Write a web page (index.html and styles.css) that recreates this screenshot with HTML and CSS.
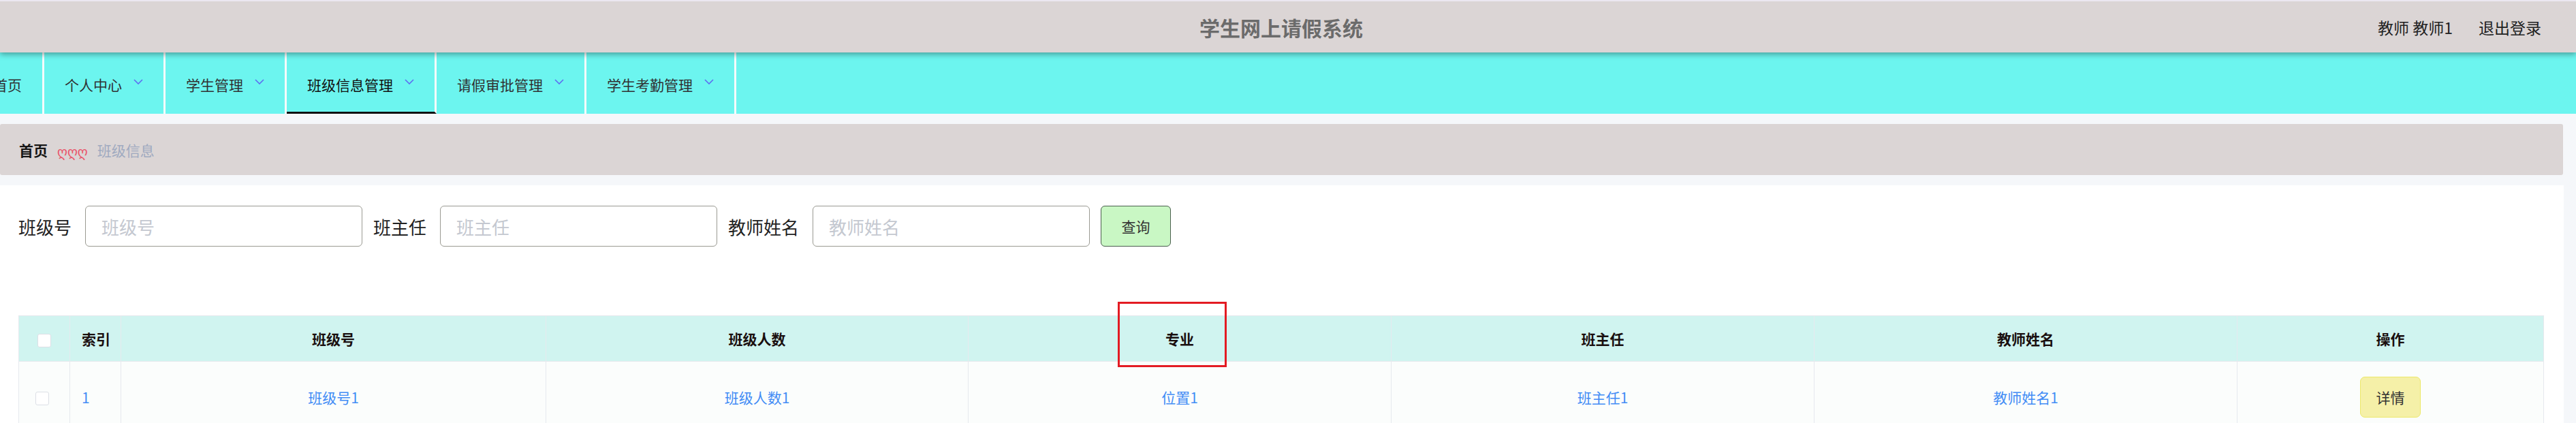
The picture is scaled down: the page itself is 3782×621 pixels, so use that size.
FILE: index.html
```html
<!DOCTYPE html>
<html lang="zh">
<head>
<meta charset="utf-8">
<title>学生网上请假系统</title>
<link rel="stylesheet" href="styles.css">
</head>
<body>
<header class="header">
  <div class="header-side"></div>
  <div class="title">学生网上请假系统</div>
  <div class="header-side user">
    <span class="user-name">教师 教师1</span>
    <span class="logout">退出登录</span>
  </div>
</header>
<nav class="nav">
  <ul class="menu">
    <li class="menu-item first">首页</li>
    <li class="menu-item">个人中心<svg class="arrow" viewBox="0 0 14 8"><polyline points="1,1 7,7 13,1"/></svg></li>
    <li class="menu-item">学生管理<svg class="arrow" viewBox="0 0 14 8"><polyline points="1,1 7,7 13,1"/></svg></li>
    <li class="menu-item active">班级信息管理<svg class="arrow" viewBox="0 0 14 8"><polyline points="1,1 7,7 13,1"/></svg></li>
    <li class="menu-item">请假审批管理<svg class="arrow" viewBox="0 0 14 8"><polyline points="1,1 7,7 13,1"/></svg></li>
    <li class="menu-item">学生考勤管理<svg class="arrow" viewBox="0 0 14 8"><polyline points="1,1 7,7 13,1"/></svg></li>
  </ul>
</nav>
<main class="main">
  <div class="breadcrumb">
    <span class="crumb-home">首页</span>
    <span class="crumb-sep">ღღღ</span>
    <span class="crumb-current">班级信息</span>
  </div>
  <section class="panel">
    <form class="search">
      <label class="search-label">班级号</label>
      <input class="search-input" placeholder="班级号">
      <label class="search-label">班主任</label>
      <input class="search-input" placeholder="班主任">
      <label class="search-label">教师姓名</label>
      <input class="search-input" placeholder="教师姓名">
      <button type="button" class="btn-search">查询</button>
    </form>
    <table class="grid">
      <colgroup>
        <col class="c-check"><col class="c-index"><col class="c-624"><col class="c-620"><col class="c-621"><col class="c-621"><col class="c-621"><col class="c-450">
      </colgroup>
      <thead>
        <tr>
          <th><span class="checkbox"></span></th>
          <th class="left">索引</th>
          <th>班级号</th>
          <th>班级人数</th>
          <th class="marked">专业<span class="mark-box"></span></th>
          <th>班主任</th>
          <th>教师姓名</th>
          <th>操作</th>
        </tr>
      </thead>
      <tbody>
        <tr>
          <td><span class="checkbox small"></span></td>
          <td class="left">1</td>
          <td>班级号1</td>
          <td>班级人数1</td>
          <td>位置1</td>
          <td>班主任1</td>
          <td>教师姓名1</td>
          <td><button type="button" class="btn-detail">详情</button></td>
        </tr>
      </tbody>
    </table>
  </section>
</main>
</body>
</html>
```
FILE: styles.css
```css
* { box-sizing: border-box; }
html, body {
  margin: 0;
  padding: 0;
  width: 3782px;
  height: 621px;
  overflow: hidden;
  background: #f5f7fa;
  font-family: "Noto Sans CJK SC", "Noto Sans", "DejaVu Sans", sans-serif;
}

.header {
  position: relative;
  z-index: 2;
  display: grid;
  grid-template-columns: 1fr auto 1fr;
  align-items: center;
  height: 77px;
  border-top: 2px solid #ebe7f1;
  background: #dbd5d5;
  box-shadow: 0 3px 8px rgba(0, 0, 0, 0.35);
}
.title {
  font-size: 30px;
  font-weight: 700;
  color: #6b6b6b;
  margin-right: 20px;
}
.user {
  display: flex;
  justify-content: flex-end;
  gap: 38px;
  padding-right: 51px;
  font-size: 23px;
  color: #222;
}

.nav {
  height: 90px;
  background: #6cf5ef;
  overflow: hidden;
}
.menu {
  display: flex;
  margin: 0 0 0 -40px;
  padding: 0;
  list-style: none;
  height: 100%;
}
.menu-item {
  display: flex;
  align-items: center;
  height: 100%;
  padding: 4px 30px 0;
  border-right: 3px solid #f7fbfb;
  font-size: 21px;
  color: #303133;
}
.menu-item.active {
  border-bottom: 3px solid #111;
  color: #111;
  padding-top: 7px;
}
.arrow {
  width: 14px;
  height: 8px;
  margin-left: 17px;
  margin-top: -8px;
  fill: none;
  stroke: #5d6cf2;
  stroke-width: 1.6;
}

.main {
  padding-top: 15px;
}
.breadcrumb {
  display: flex;
  align-items: center;
  height: 75px;
  width: 3763px;
  padding-left: 28px;
  background: #dbd5d5;
  border-radius: 3px;
  font-size: 21px;
}
.crumb-home {
  font-weight: 700;
  color: #161616;
}
.crumb-sep {
  margin: 6px 14px 0;
  color: #ea5268;
  font-family: "DejaVu Sans", sans-serif;
  font-size: 19px;
}
.crumb-current {
  color: #a0aac0;
}

.panel {
  margin-top: 15px;
  width: 3764px;
  height: 349px;
  overflow: hidden;
  background: #fff;
  padding: 30px 30px 0 27px;
}
.search {
  display: flex;
  align-items: center;
  height: 60px;
  margin: 0;
}
.search-label {
  font-size: 26px;
  color: #222;
  margin-right: 20px;
}
.search-input {
  width: 407px;
  height: 60px;
  margin-right: 16px;
  padding: 0 0 0 23px;
  border: 1px solid #9a9a92;
  border-radius: 6px;
  font-family: inherit;
  font-size: 26px;
  color: #333;
  outline: none;
}
.search-input::placeholder {
  color: #c4c8d0;
}
.btn-search {
  width: 103px;
  height: 60px;
  background: #c9f7c4;
  border: 1px solid #4a5e4e;
  border-radius: 6px;
  font-family: inherit;
  font-size: 21px;
  color: #333;
}

.grid {
  margin-top: 101px;
  width: 3707px;
  border-collapse: collapse;
  table-layout: fixed;
  font-size: 21px;
}
.c-check { width: 75px; }
.c-index { width: 75px; }
.c-624 { width: 624px; }
.c-620 { width: 620px; }
.c-621 { width: 621px; }
.c-450 { width: 450px; }
.grid th, .grid td {
  border: 1px solid #e6e9ee;
  text-align: center;
  padding: 0;
}
.grid th {
  height: 67px;
  background: #d0f4f0;
  font-weight: 700;
  color: #1a0f0f;
}
.grid td {
  height: 91px;
  padding-top: 22px;
  line-height: 60px;
  vertical-align: top;
  border-bottom: none;
  background: #fbfdfc;
  color: #428cf5;
}
.grid .left {
  text-align: left;
  padding-left: 17px;
}
.checkbox {
  display: inline-block;
  width: 20px;
  height: 20px;
  vertical-align: middle;
  background: #fff;
  border: 1px solid #dcdfe6;
  border-radius: 3px;
}
.checkbox.small {
  margin-right: 6px;
  margin-top: -2px;
}
.marked {
  position: relative;
}
.mark-box {
  position: absolute;
  left: 219px;
  top: -21px;
  width: 160px;
  height: 96px;
  border: 3px solid #e31b23;
}
.btn-detail {
  display: inline-block;
  vertical-align: top;
  width: 89px;
  height: 60px;
  background: #f5f0a8;
  border: 1px solid #ece86a;
  border-radius: 7px;
  font-family: inherit;
  font-size: 21px;
  line-height: 1;
  color: #333;
}
```
